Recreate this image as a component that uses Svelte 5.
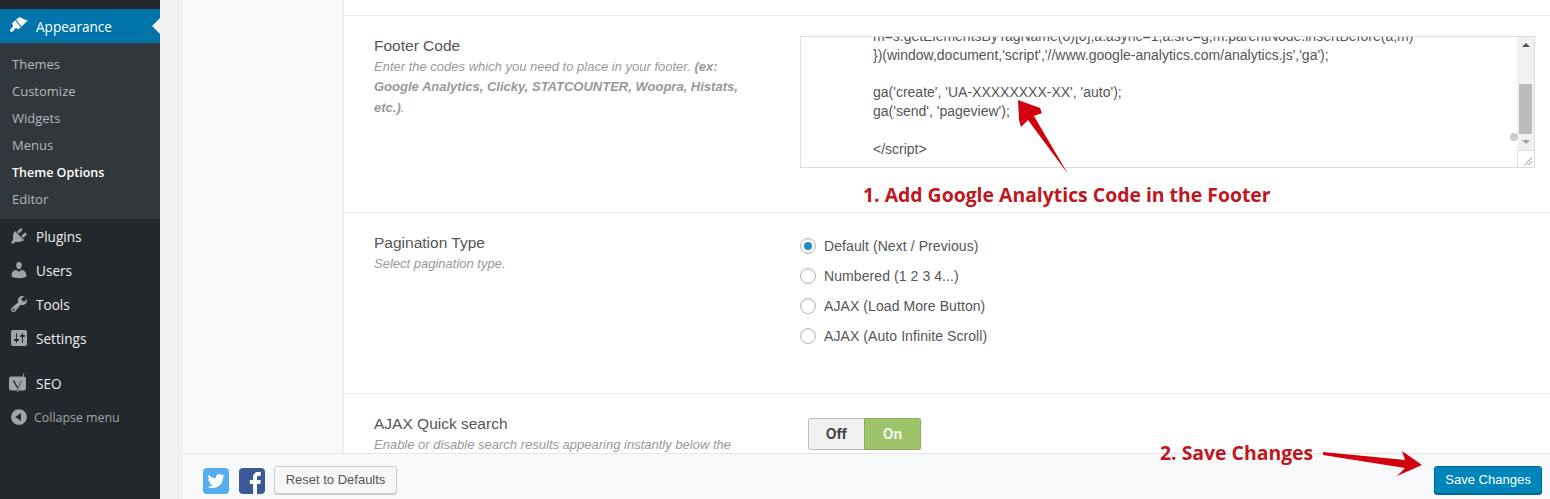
<script>
  const submenu = ['Themes', 'Customize', 'Widgets', 'Menus', 'Theme Options', 'Editor'];
  const current = 'Theme Options';

  const menu = [
    { label: 'Plugins', d: 'M13.11 4.36L9.87 7.6 8 5.73l3.24-3.24c.35-.34 1.05-.2 1.56.32.52.51.66 1.21.31 1.55zm-8 1.77l.91-1.12 9.01 9.01-1.19.84c-.71.71-2.63 1.16-3.82 1.16H6.14L4.9 17.26c-.59.59-1.54.59-2.12 0-.59-.58-.59-1.53 0-2.12l1.24-1.24v-3.88c0-1.13.4-3.19 1.09-3.89zm7.26 3.97l3.24-3.24c.34-.35 1.04-.21 1.55.31.52.51.66 1.21.31 1.55l-3.24 3.25z' },
    { label: 'Users', d: 'M10 9.25c-2.27 0-2.73-3.44-2.73-3.44C7 4.02 7.82 2 9.97 2c2.16 0 2.98 2.02 2.71 3.81 0 0-.41 3.44-2.68 3.44zm0 2.57L12.72 10c2.39 0 4.52 2.33 4.52 4.53v2.49s-3.65 1.13-7.24 1.13c-3.65 0-7.24-1.13-7.24-1.13v-2.49c0-2.25 1.94-4.48 4.47-4.48z' },
    { label: 'Tools', d: 'M16.68 9.77c-1.34 1.34-3.3 1.67-4.95.99l-5.41 6.52c-.99.99-2.59.99-3.58 0s-.99-2.59 0-3.57l6.52-5.42c-.68-1.65-.35-3.61.99-4.95 1.28-1.28 3.12-1.62 4.72-1.06l-2.89 2.89 2.82 2.82 2.86-2.87c.53 1.58.18 3.39-1.08 4.65zM3.81 16.21c.4.39 1.04.39 1.43 0 .4-.4.4-1.04 0-1.43-.39-.4-1.03-.4-1.43 0-.39.39-.39 1.03 0 1.43z' },
    { label: 'Settings', d: 'M18 16V4c0-1.1-.9-2-2-2H4c-1.1 0-2 .9-2 2v12c0 1.1.9 2 2 2h12c1.1 0 2-.9 2-2zM8 11h1c.55 0 1 .45 1 1s-.45 1-1 1H8v1.5c0 .28-.22.5-.5.5s-.5-.22-.5-.5V13H6c-.55 0-1-.45-1-1s.45-1 1-1h1V5.5c0-.28.22-.5.5-.5s.5.22.5.5V11zm5-2h-1c-.55 0-1-.45-1-1s.45-1 1-1h1V5.5c0-.28.22-.5.5-.5s.5.22.5.5V7h1c.55 0 1 .45 1 1s-.45 1-1 1h-1v5.5c0 .28-.22.5-.5.5s-.5-.22-.5-.5V9z' }
  ];

  const pagination = ['Default (Next / Previous)', 'Numbered (1 2 3 4...)', 'AJAX (Load More Button)', 'AJAX (Auto Infinite Scroll)'];
</script>

<div class="page">
  <aside class="sidebar">
    <div class="menu-active">
      <svg class="icon white" viewBox="0 0 20 20"><path d="M7 3.500L10 1.500c1.500-.6 2.500.4 4 1.200 1.500.9 3 1.400 5 1.300l-6.500 6.800zM6.200 4.300l5.600 6.900-1.800 1.600c-.6.500-1.200.4-1.700 0l-.7-.6c-.4-.3-.9-.2-1.200.1l-2.400 2.900c-.5.6-1.400.9-2.200.4-.9-.6-1-1.500-.5-2.200l2.600-2.900c.3-.4.300-.9 0-1.300l-.5-.6c-.4-.5-.4-1.100 0-1.500z"/></svg>
      <span>Appearance</span>
      <i class="notch"></i>
    </div>
    <ul class="submenu">
      {#each submenu as item}
        <li class:current={item === current}>{item}</li>
      {/each}
    </ul>
    <ul class="menu">
      {#each menu as item}
        <li>
          <svg class="icon" viewBox="0 0 20 20"><path d={item.d} /></svg>
          <span>{item.label}</span>
        </li>
      {/each}
    </ul>
    <div class="menu-item seo">
      <svg class="icon" viewBox="0 0 20 20">
        <rect x="0" y="3.500" width="17" height="14" rx="2.500" />
        <path class="yoast" d="M4.500 7.500l3.800 7M12.500 7.500L8.500 17.500" />
        <path class="yoast-slash" d="M15 0.500L8.500 19" />
      </svg>
      <span>SEO</span>
    </div>
    <div class="collapse">
      <svg class="icon" viewBox="0 0 20 20"><path d="M10 2.16c4.33 0 7.84 3.51 7.84 7.84s-3.51 7.84-7.84 7.84S2.16 14.33 2.16 10 5.71 2.16 10 2.16zm2 11.72V6.12L6.18 9.97z"/></svg>
      <span>Collapse menu</span>
    </div>
  </aside>

  <div class="panel">
    <div class="panel-body">
      <div class="tabs"></div>
      <main class="options">
        <div class="option-top"></div>

        <section class="option footer-code">
          <div class="heading">
            <h3>Footer Code</h3>
            <p>Enter the codes which you need to place in your footer. <b>(ex: Google Analytics, Clicky, STATCOUNTER, Woopra, Histats, etc.)</b>.</p>
          </div>
          <div class="textarea">
            <pre class="code">m=s.getElementsByTagName(o)[0];a.async=1;a.src=g;m.parentNode.insertBefore(a,m)
})(window,document,'script','//www.google-analytics.com/analytics.js','ga');

ga('create', 'UA-XXXXXXXX-XX', 'auto');
ga('send', 'pageview');

&lt;/script&gt;</pre>
            <div class="scrollbar">
              <i class="arrow up"></i>
              <div class="track"><div class="thumb"></div></div>
              <i class="arrow down"></i>
              <div class="resizer">
                <svg viewBox="0 0 17 17"><path d="M15 7L7 15M15 11l-4 4" /></svg>
              </div>
            </div>
            <i class="dot"></i>
          </div>
        </section>

        <section class="option pagination">
          <div class="heading">
            <h3>Pagination Type</h3>
            <p>Select pagination type.</p>
          </div>
          <div class="radios">
            {#each pagination as label, i}
              <div class="radio-row">
                <i class="radio" class:checked={i === 0}></i>
                <span>{label}</span>
              </div>
            {/each}
          </div>
        </section>

        <section class="option search">
          <div class="heading">
            <h3>AJAX Quick search</h3>
            <p>Enable or disable search results appearing instantly below the</p>
          </div>
          <div class="toggle">
            <span class="off">Off</span>
            <span class="on">On</span>
          </div>
        </section>
      </main>
    </div>

    <footer class="bottom">
      <svg class="social" viewBox="0 0 26 26">
        <rect width="26" height="26" rx="4" fill="#55acee" />
        <path fill="#fff" d="M21.5 7.6c-.6.3-1.3.5-2 .6.7-.4 1.3-1.1 1.5-1.9-.7.4-1.4.7-2.2.8-.6-.7-1.5-1.1-2.5-1.1-1.9 0-3.5 1.6-3.5 3.5 0 .3 0 .5.1.8-2.9-.1-5.5-1.5-7.2-3.6-.3.5-.5 1.1-.5 1.8 0 1.2.6 2.3 1.6 2.9-.6 0-1.1-.2-1.6-.4 0 1.7 1.2 3.1 2.8 3.4-.5.1-1 .2-1.6.1.4 1.4 1.7 2.4 3.3 2.4-1.5 1.2-3.3 1.8-5.2 1.6 1.6 1 3.4 1.6 5.4 1.6 6.5 0 10-5.4 10-10v-.5c.7-.5 1.3-1.1 1.8-1.8z" />
      </svg>
      <svg class="social" viewBox="0 0 26 26">
        <rect width="26" height="26" rx="4" fill="#3b5998" />
        <path fill="#fff" d="M18 26v-10h3.3l.5-3.9H18V9.7c0-1.1.3-1.9 1.9-1.9h2V4.300c-.4 0-1.600-.2-2.900-.2-2.900 0-4.900 1.800-4.900 5v3h-3.300V16h3.300v10z" />
      </svg>
      <button class="reset">Reset to Defaults</button>
      <button class="save">Save Changes</button>
    </footer>
  </div>

  <svg class="arrows" viewBox="0 0 1550 499">
    <polygon points="1018,100 1040,108 1042,113 1034,116 1068,174 1028,120 1021,127 1019,120" />
    <polygon points="1323,452 1405,460 1402,451 1422,465 1397,476 1405,468 1323,455" />
  </svg>
  <div class="note note-one">1. Add Google Analytics Code in the Footer</div>
  <div class="note note-two">2. Save Changes</div>
</div>

<style>
  :global(body) {
    margin: 0;
    overflow: hidden;
  }
  .page {
    position: relative;
    display: flex;
    width: 1550px;
    height: 499px;
    overflow: hidden;
    background: #f1f1f1;
    font-family: "Liberation Sans", Arial, sans-serif;
    color: #555;
  }

  /* admin menu */
  .sidebar {
    width: 160px;
    flex: none;
    padding-top: 9px;
    box-sizing: border-box;
    background: #23282d;
    font-family: "Open Sans", sans-serif;
    font-size: 13.6px;
    color: #eee;
  }
  .icon {
    width: 20px;
    height: 20px;
    flex: none;
    fill: #a0a5aa;
  }
  .icon.white {
    fill: #fff;
  }
  .menu-active {
    position: relative;
    display: flex;
    align-items: center;
    gap: 7px;
    height: 34px;
    padding-left: 9px;
    background: #0073aa;
    color: #fff;
  }
  .notch {
    position: absolute;
    right: 0;
    top: 9px;
    border: 8px solid transparent;
    border-right-color: #f1f1f1;
  }
  .submenu {
    list-style: none;
    margin: 0;
    padding: 8px 0 6px 12px;
    background: #32373c;
    font-size: 13px;
    color: #b4b9be;
  }
  .submenu li {
    height: 27px;
    line-height: 27px;
  }
  .submenu .current {
    color: #fff;
    font-size: 12.5px;
    font-weight: 600;
  }
  .menu {
    list-style: none;
    margin: 0;
    padding: 0;
  }
  .menu li,
  .menu-item {
    display: flex;
    align-items: center;
    gap: 7px;
    height: 34px;
    padding-left: 9px;
  }
  .seo {
    margin-top: 11px;
  }
  .yoast {
    fill: none;
    stroke: #23282d;
    stroke-width: 1.4;
  }
  .yoast-slash {
    fill: none;
    stroke: #a0a5aa;
    stroke-width: 1;
  }
  .collapse {
    display: flex;
    align-items: center;
    gap: 5px;
    height: 34px;
    padding: 0 0 0 9px;
    font-size: 12.4px;
    color: #a0a5aa;
  }

  /* options panel */
  .panel {
    flex: 1;
    display: flex;
    flex-direction: column;
    margin-left: 23px;
    min-width: 0;
    background: #f8f9fa;
  }
  .panel-body {
    flex: 1;
    display: flex;
    min-height: 0;
  }
  .tabs {
    width: 160px;
    flex: none;
    border-right: 1px solid #e9e9e9;
  }
  .options {
    flex: 1;
    display: flex;
    flex-direction: column;
    background: #fff;
    overflow: hidden;
  }
  .option-top {
    height: 15px;
    flex: none;
    border-bottom: 1px solid #eee;
  }
  .option {
    display: flex;
    flex: none;
    box-sizing: border-box;
    padding-left: 30px;
    border-bottom: 1px solid #eee;
  }
  .heading {
    width: 370px;
    flex: none;
  }
  h3 {
    margin: 0;
    font-size: 15.5px;
    font-weight: 400;
    line-height: 20px;
    color: #555;
  }
  .heading p {
    margin: 0;
    padding-top: 0.5px;
    font-size: 13px;
    font-style: italic;
    line-height: 20.5px;
    color: #999;
  }
  .footer-code {
    height: 197px;
    padding-top: 20px;
  }
  .footer-code .heading {
    width: 426px;
  }
  .footer-code p {
    width: 372px;
  }
  .textarea {
    position: relative;
    display: flex;
    width: 735px;
    height: 132px;
    box-sizing: border-box;
    border: 1px solid #ddd;
    overflow: hidden;
  }
  .code {
    flex: 1;
    margin: -10px 0 0;
    padding-left: 72px;
    font-family: "Liberation Sans", Arial, sans-serif;
    font-size: 14px;
    line-height: 18.75px;
    color: #555;
    white-space: pre;
    overflow: hidden;
  }
  .scrollbar {
    display: flex;
    flex-direction: column;
    align-items: center;
    width: 17px;
    flex: none;
    background: #f1f1f1;
    position: relative;
  }
  .arrow {
    width: 0;
    height: 0;
    margin: 6px 0;
    border: 4px solid transparent;
  }
  .arrow.up {
    border-top: 0;
    border-bottom: 4px solid #505050;
  }
  .arrow.down {
    border-bottom: 0;
    border-top: 4px solid #a3a3a3;
  }
  .track {
    flex: 1;
    width: 100%;
    display: flex;
    flex-direction: column;
    justify-content: flex-end;
    align-items: center;
  }
  .thumb {
    width: 13px;
    height: 50px;
    background: #bcbcbc;
  }
  .resizer {
    width: 17px;
    height: 17px;
    background: #fff;
    border-top: 1px solid #ddd;
    border-left: 1px solid #ddd;
    box-sizing: border-box;
  }
  .resizer svg {
    display: block;
    width: 100%;
    height: 100%;
  }
  .resizer path {
    fill: none;
    stroke: #777;
    stroke-width: 1;
  }
  .dot {
    position: absolute;
    right: 16px;
    top: 96px;
    width: 8px;
    height: 8px;
    border-radius: 50%;
    background: #ccc;
  }

  .pagination {
    height: 181px;
    padding-top: 20px;
  }
  .pagination .heading {
    width: 426px;
  }
  .radios {
    display: flex;
    flex-direction: column;
    margin-top: -2px;
  }
  .radio-row {
    display: flex;
    align-items: center;
    gap: 8px;
    height: 30px;
    font-size: 14px;
    letter-spacing: 0.08px;
    color: #555;
  }
  .radio {
    display: flex;
    align-items: center;
    justify-content: center;
    width: 16px;
    height: 16px;
    box-sizing: border-box;
    border: 1px solid #b4b9be;
    border-radius: 50%;
    background: #fff;
    box-shadow: inset 0 1px 2px rgba(0, 0, 0, 0.1);
  }
  .radio.checked::before {
    content: "";
    width: 8px;
    height: 8px;
    border-radius: 50%;
    background: #1e8cbe;
  }

  .search {
    border-bottom: 0;
    padding-top: 20px;
  }
  .search .heading {
    width: 434px;
  }
  .search p {
    white-space: nowrap;
  }
  .toggle {
    display: flex;
    height: 32px;
    margin-top: 4px;
    font-family: Inter, sans-serif;
    font-size: 14px;
    font-weight: 700;
    line-height: 30px;
    text-align: center;
    border-radius: 3px;
    overflow: hidden;
  }
  .off {
    width: 56px;
    box-sizing: border-box;
    border: 1px solid #bbb;
    border-right: 0;
    border-radius: 3px 0 0 3px;
    background: #f0f0f0;
    color: #444;
  }
  .on {
    width: 57px;
    box-sizing: border-box;
    border: 1px solid #8bad5d;
    background: #9dc46b;
    color: #f4f8ec;
  }

  .bottom {
    display: flex;
    align-items: flex-start;
    height: 46px;
    flex: none;
    box-sizing: border-box;
    padding: 12px 8px 0 20px;
    border-top: 1px solid #e5e5e5;
    background: #f8f9fa;
  }
  .social {
    width: 26px;
    height: 26px;
    margin: 2px 10px 0 0;
    flex: none;
  }
  button {
    height: 28px;
    font-family: "Liberation Sans", Arial, sans-serif;
    font-size: 13px;
    border-radius: 3px;
    padding: 0 0 2px;
  }
  .reset {
    width: 123px;
    margin-left: -1px;
    border: 1px solid #ccc;
    background: #f7f7f7;
    color: #555;
    box-shadow: 0 1px 0 #ccc;
  }
  .save {
    width: 108px;
    margin-left: auto;
    border: 1px solid #006799;
    background: #0085ba;
    color: #fff;
    box-shadow: 0 1px 0 #006799;
  }

  /* red annotations drawn over the screenshot */
  .arrows {
    position: absolute;
    inset: 0;
    width: 1550px;
    height: 499px;
    fill: #d2000e;
    pointer-events: none;
  }
  .note {
    position: absolute;
    font-family: "Open Sans", sans-serif;
    font-size: 19.4px;
    font-weight: 700;
    line-height: 24px;
    color: #bf1722;
    white-space: nowrap;
  }
  .note-one {
    left: 863px;
    top: 183px;
  }
  .note-two {
    left: 1160px;
    top: 441px;
  }
</style>
